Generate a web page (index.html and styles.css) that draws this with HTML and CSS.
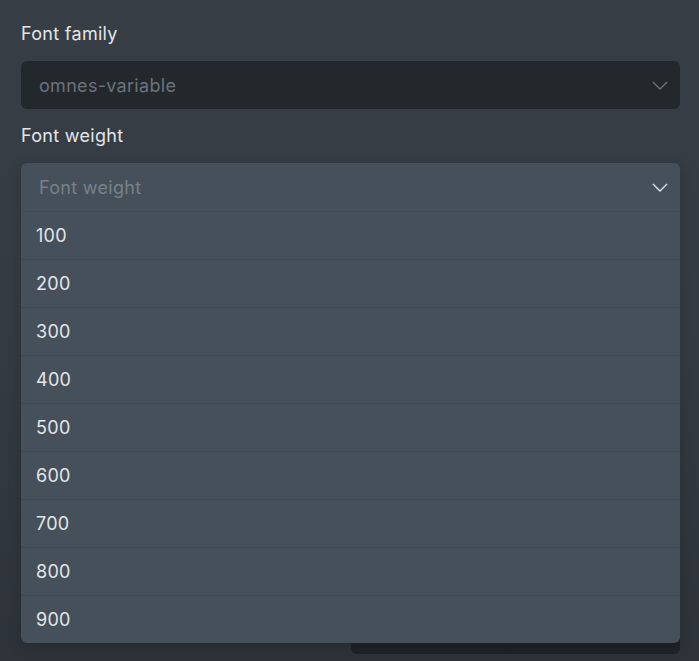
FILE: index.html
```html
<!DOCTYPE html>
<html lang="en">
<head>
<meta charset="utf-8">
<title>Font settings</title>
<link rel="stylesheet" href="styles.css">
</head>
<body>
<div class="panel">
  <div class="field">
    <div class="label">Font family</div>
    <div class="select select-dark">
      <span class="value muted">omnes-variable</span>
      <svg class="chev" width="16" height="9" viewBox="0 0 16 9"><path d="M1 1l7 7 7-7" fill="none" stroke="#6b737c" stroke-width="1.4"/></svg>
    </div>
  </div>
  <div class="field">
    <div class="label">Font weight</div>
    <div class="dropdown-wrap">
      <div class="hidden-btn"></div>
      <div class="dropdown">
        <div class="select select-open">
          <span class="value placeholder">Font weight</span>
          <svg class="chev" width="16" height="9" viewBox="0 0 16 9"><path d="M1 1l7 7 7-7" fill="none" stroke="#dfe3e7" stroke-width="1.4"/></svg>
        </div>
        <ul class="options">
          <li>100</li>
          <li>200</li>
          <li>300</li>
          <li>400</li>
          <li>500</li>
          <li>600</li>
          <li>700</li>
          <li>800</li>
          <li>900</li>
        </ul>
      </div>
    </div>
  </div>
</div>
</body>
</html>
```
FILE: styles.css
```css
html, body {
  margin: 0;
  padding: 0;
  height: 100%;
}
body {
  background: linear-gradient(180deg, #373e46 0%, #343b42 50%, #2d3339 100%);
  font-family: Inter, "Noto Sans", sans-serif;
  color: #e3e6e9;
  overflow: hidden;
}
.panel {
  padding: 22px 19px 0 21px;
}
.label {
  font-size: 18px;
  letter-spacing: 0.3px;
  line-height: 24px;
  color: #e3e6e9;
  margin-bottom: 15px;
}
.field + .field {
  margin-top: 15px;
}
.select {
  height: 48px;
  box-sizing: border-box;
  display: flex;
  align-items: center;
  justify-content: space-between;
  padding: 0 12px 0 18px;
  font-size: 18px;
  letter-spacing: 0.3px;
}
.select-dark {
  background: #23282d;
  border-radius: 6px;
}
.muted {
  color: #6b737c;
}
.placeholder {
  color: #78818b;
}
.chev {
  display: block;
}
.dropdown-wrap {
  position: relative;
}
.hidden-btn {
  position: absolute;
  left: 330px;
  right: 0;
  top: 443px;
  height: 48px;
  background: #1f2328;
  border-radius: 6px;
}
.dropdown {
  position: relative;
  background: #46505a;
  border-radius: 6px;
  box-shadow: 0 4px 14px rgba(0, 0, 0, 0.18);
}
.options {
  list-style: none;
  margin: 0;
  padding: 0;
}
.options li {
  height: 48px;
  box-sizing: border-box;
  border-top: 1px solid #3e4750;
  display: flex;
  align-items: center;
  padding-left: 15px;
  font-size: 18px;
  letter-spacing: 0.3px;
  color: #e3e6e9;
}
.options li:first-child {
  border-top-color: #434c56;
}
```
